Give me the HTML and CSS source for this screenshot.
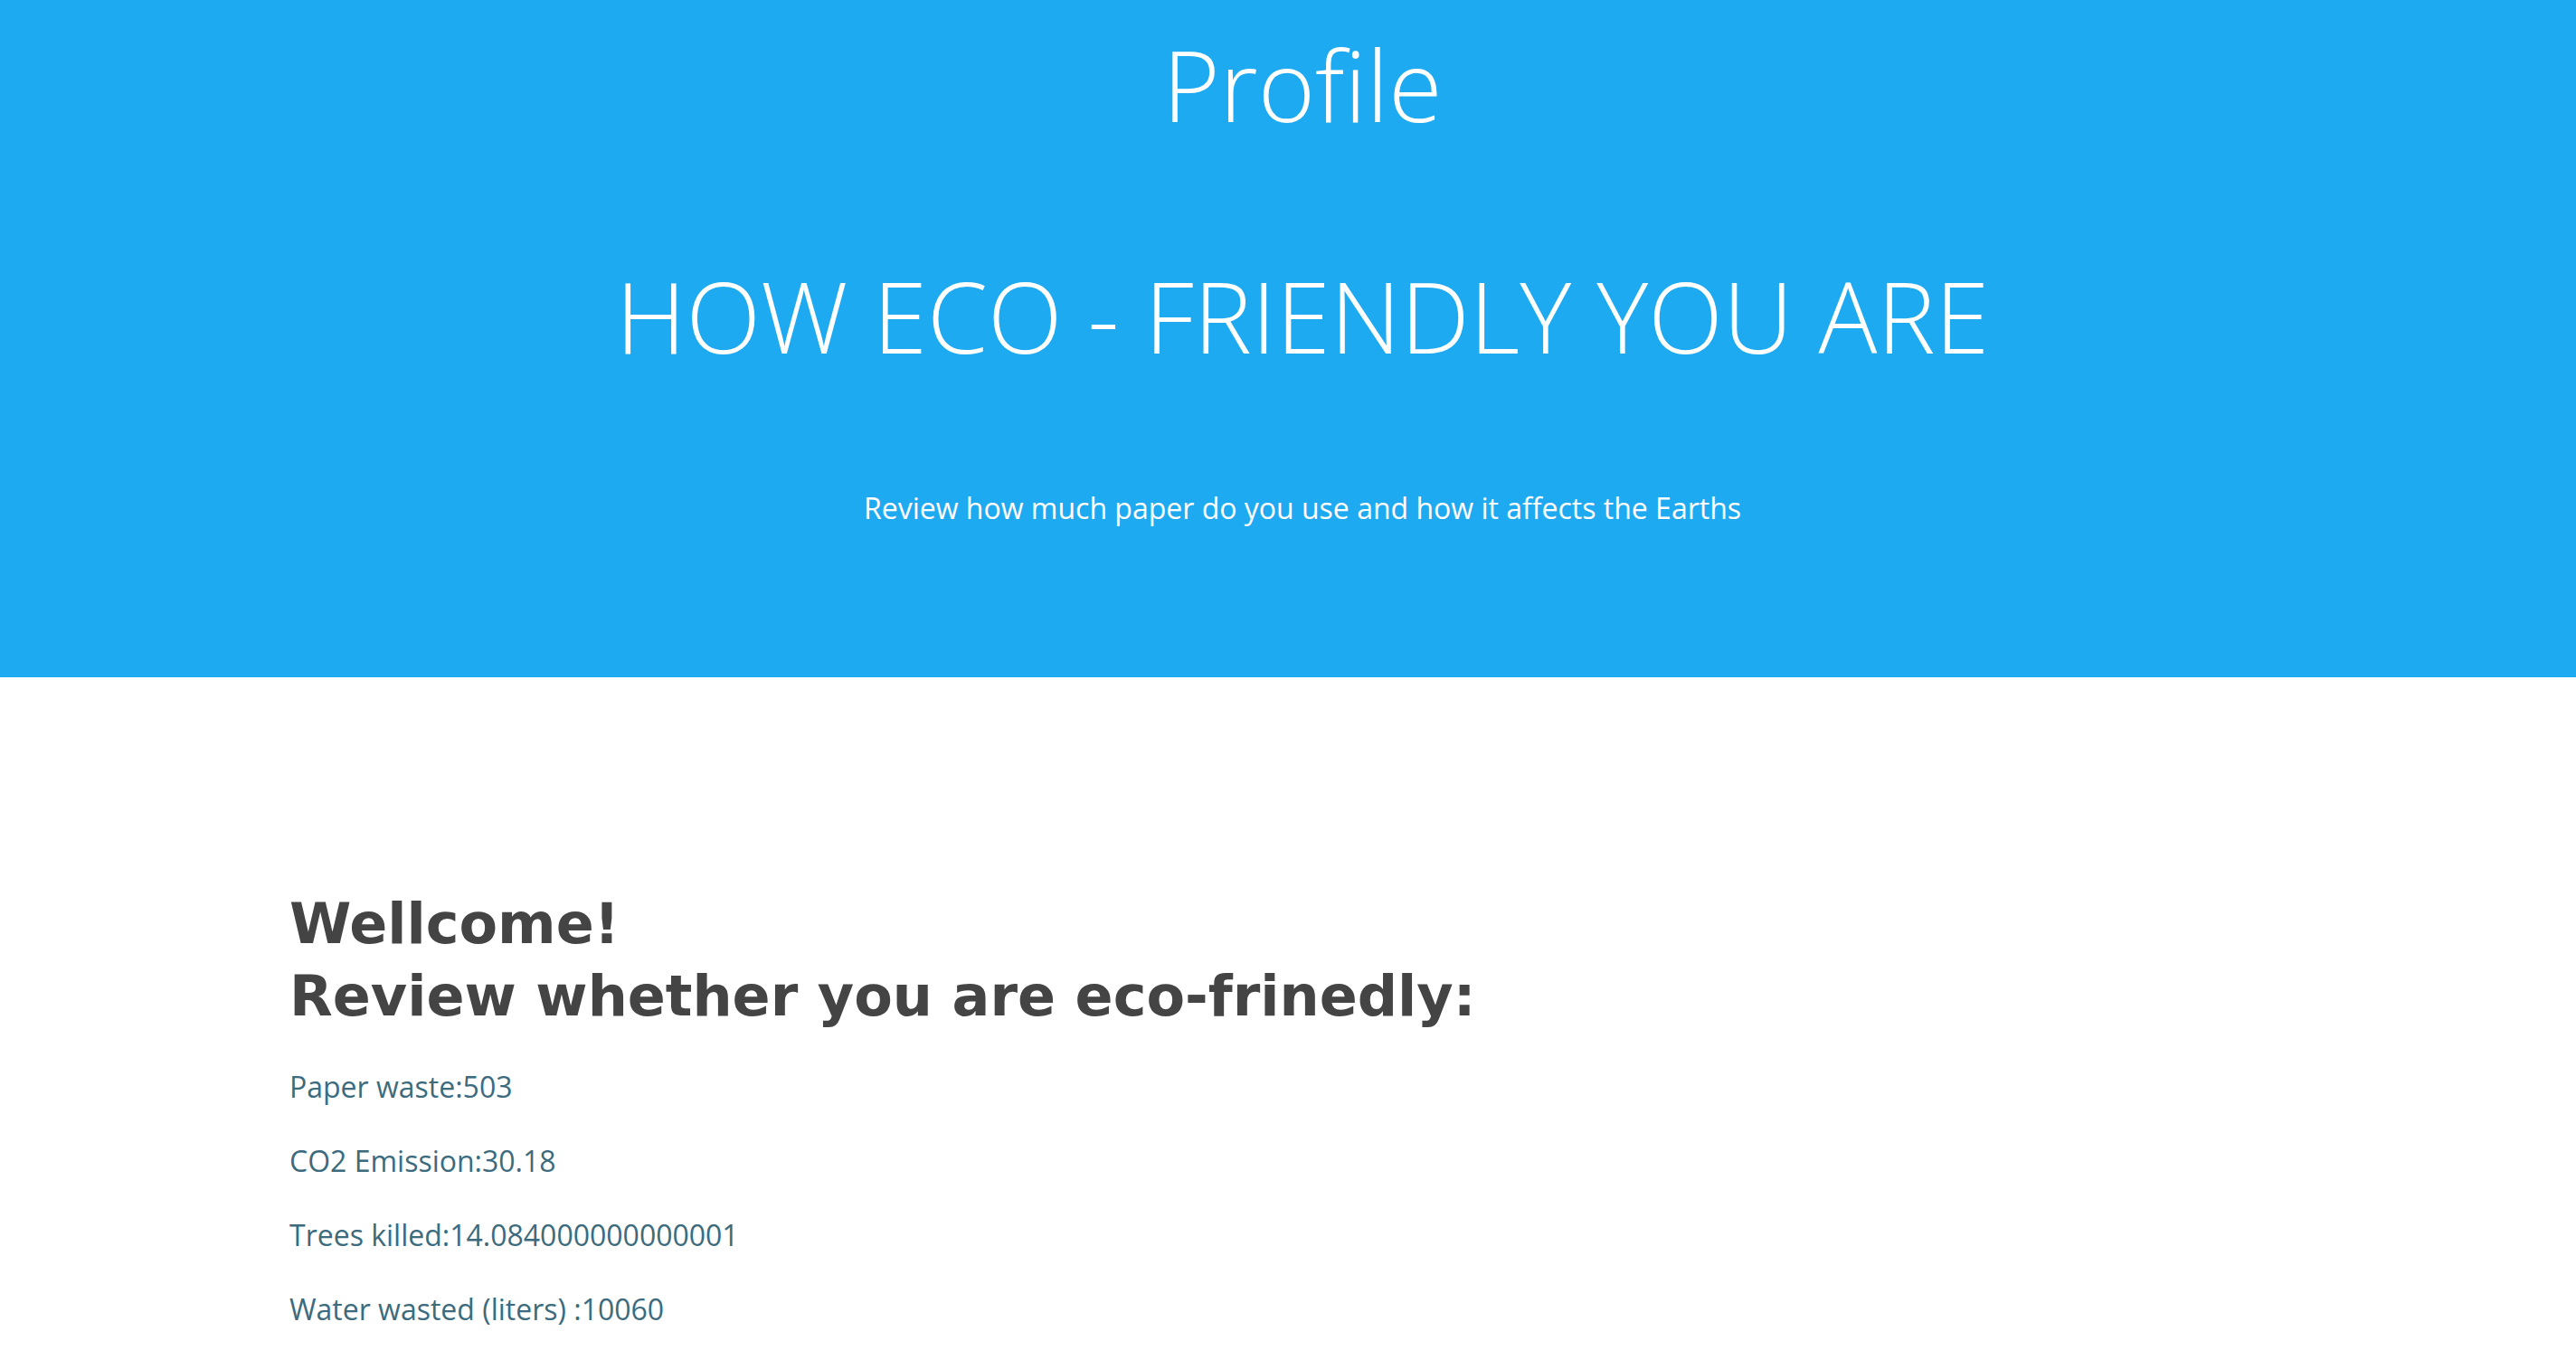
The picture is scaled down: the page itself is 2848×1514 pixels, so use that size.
FILE: index.html
```html
<!DOCTYPE html>
<html lang="en">
<head>
<meta charset="utf-8">
<title>Profile</title>
<link rel="stylesheet" href="styles.css">
</head>
<body>
<header class="hero">
  <h1 class="hero-title">Profile</h1>
  <h2 class="hero-heading">HOW ECO - FRIENDLY YOU ARE</h2>
  <p class="hero-sub">Review how much paper do you use and how it affects the Earths</p>
</header>
<main class="content">
  <h3 class="welcome">Wellcome!<br>Review whether you are eco-frinedly:</h3>
  <ul class="stats">
    <li class="stat">Paper waste:503</li>
    <li class="stat">CO2 Emission:30.18</li>
    <li class="stat">Trees killed:14.084000000000001</li>
    <li class="stat">Water wasted (liters) :10060</li>
  </ul>
</main>
</body>
</html>
```
FILE: styles.css
```css
html, body {
  margin: 0;
  padding: 0;
  background: #ffffff;
}

body {
  font-family: "Open Sans", "Liberation Sans", sans-serif;
}

.hero {
  background: #1eaaf1;
  color: #ffffff;
  text-align: center;
  padding: 40px 0 171px 32px;
  display: flex;
  flex-direction: column;
  align-items: center;
}

.hero-title {
  margin: 0;
  font-size: 108px;
  font-weight: 300;
  line-height: 1;
}

.hero-heading {
  margin: 148px 0 0;
  font-size: 108px;
  font-weight: 300;
  line-height: 1;
}

.hero-sub {
  margin: 142px 0 0;
  font-size: 32px;
  font-weight: 400;
  line-height: 1;
}

.content {
  padding: 233px 320px 60px;
}

.welcome {
  margin: 0;
  font-family: "DejaVu Sans", Verdana, sans-serif;
  font-weight: 700;
  font-size: 62px;
  line-height: 80px;
  color: #444444;
}

.stats {
  list-style: none;
  margin: 44px 0 0;
  padding: 0;
  display: flex;
  flex-direction: column;
  gap: 50px;
}

.stat {
  font-size: 32px;
  line-height: 1;
  color: #3d6b7e;
}
```
